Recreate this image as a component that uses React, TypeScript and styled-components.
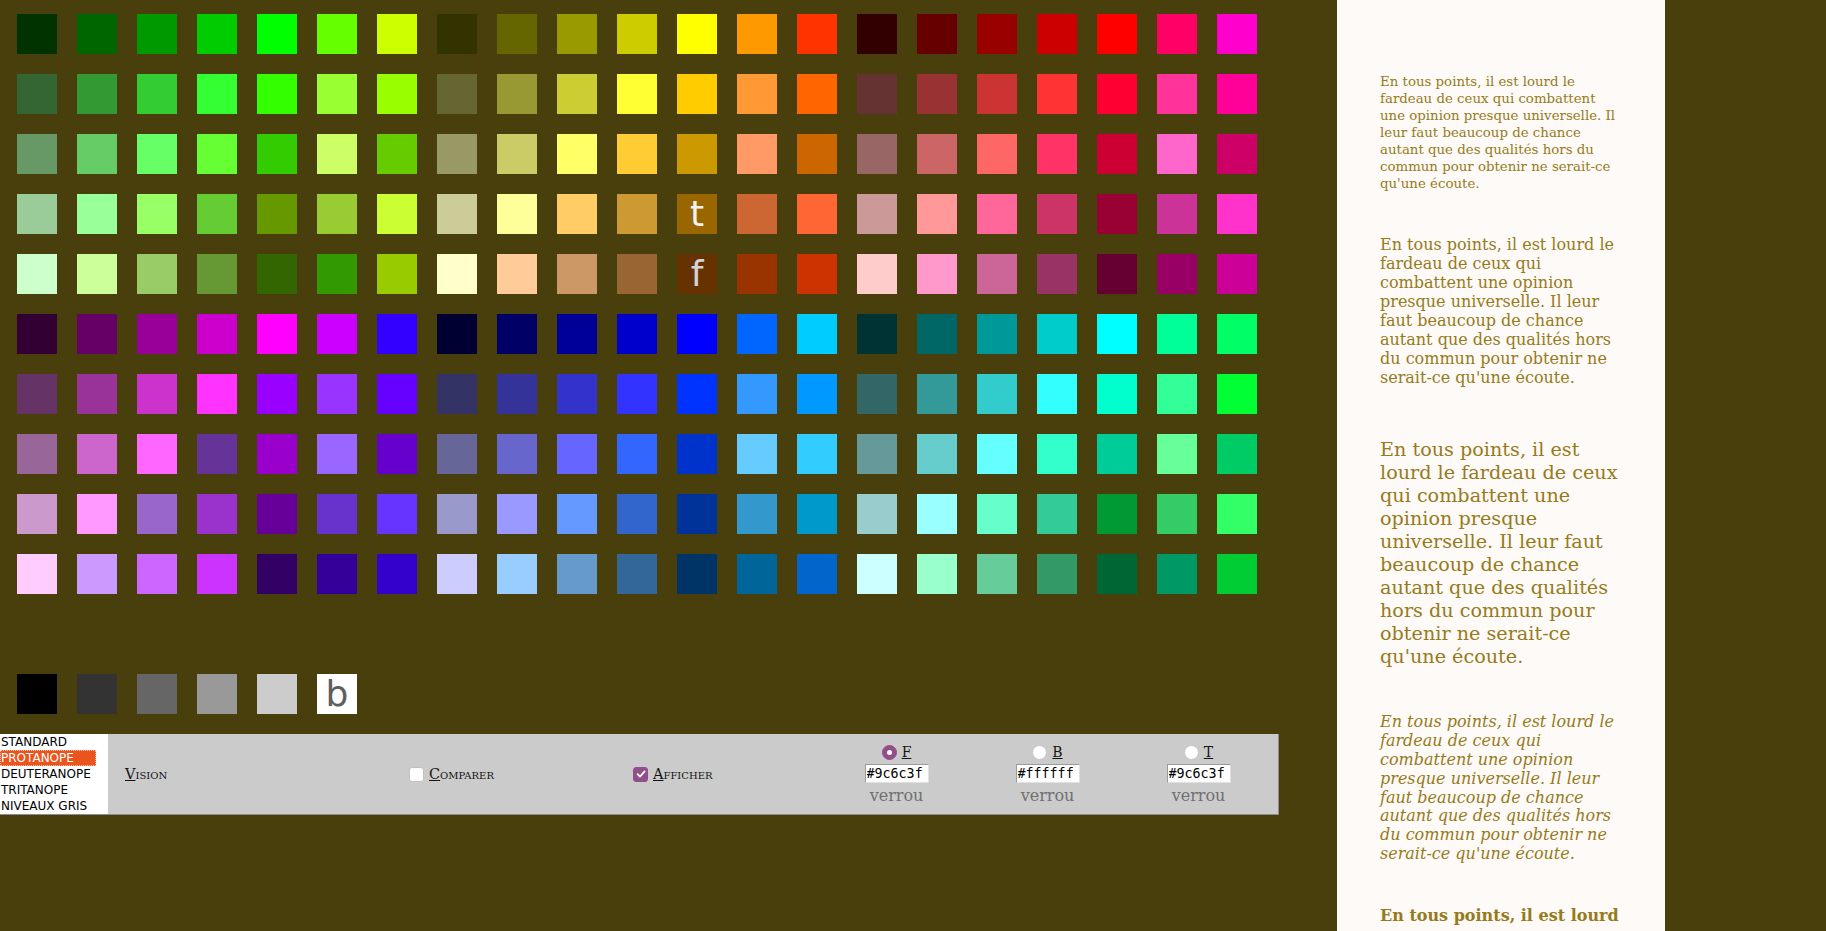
import React from "react";
import styled, { createGlobalStyle } from "styled-components";

const GlobalStyle = createGlobalStyle`
  html, body { margin: 0; padding: 0; background: #483f0d; overflow: hidden; }
  body { font-family: "DejaVu Serif", serif; }
  * { box-sizing: border-box; }
`;

const ROWS: string[][] = [
  ["003300","006600","009900","00CC00","00FF00","66FF00","CCFF00","333300","666600","999900","CCCC00","FFFF00","FF9900","FF3300","330000","660000","990000","CC0000","FF0000","FF0066","FF00CC"],
  ["336633","339933","33CC33","33FF33","33FF00","99FF33","99FF00","666633","999933","CCCC33","FFFF33","FFCC00","FF9933","FF6600","663333","993333","CC3333","FF3333","FF0033","FF3399","FF0099"],
  ["669966","66CC66","66FF66","66FF33","33CC00","CCFF66","66CC00","999966","CCCC66","FFFF66","FFCC33","CC9900","FF9966","CC6600","996666","CC6666","FF6666","FF3366","CC0033","FF66CC","CC0066"],
  ["99CC99","99FF99","99FF66","66CC33","669900","99CC33","CCFF33","CCCC99","FFFF99","FFCC66","CC9933","996600","CC6633","FF6633","CC9999","FF9999","FF6699","CC3366","990033","CC3399","FF33CC"],
  ["CCFFCC","CCFF99","99CC66","669933","336600","339900","99CC00","FFFFCC","FFCC99","CC9966","996633","663300","993300","CC3300","FFCCCC","FF99CC","CC6699","993366","660033","990066","CC0099"],
  ["330033","660066","990099","CC00CC","FF00FF","CC00FF","3300FF","000033","000066","000099","0000CC","0000FF","0066FF","00CCFF","003333","006666","009999","00CCCC","00FFFF","00FF99","00FF66"],
  ["663366","993399","CC33CC","FF33FF","9900FF","9933FF","6600FF","333366","333399","3333CC","3333FF","0033FF","3399FF","0099FF","336666","339999","33CCCC","33FFFF","00FFCC","33FF99","00FF33"],
  ["996699","CC66CC","FF66FF","663399","9900CC","9966FF","6600CC","666699","6666CC","6666FF","3366FF","0033CC","66CCFF","33CCFF","669999","66CCCC","66FFFF","33FFCC","00CC99","66FF99","00CC66"],
  ["CC99CC","FF99FF","9966CC","9933CC","660099","6633CC","6633FF","9999CC","9999FF","6699FF","3366CC","003399","3399CC","0099CC","99CCCC","99FFFF","66FFCC","33CC99","009933","33CC66","33FF66"],
  ["FFCCFF","CC99FF","CC66FF","CC33FF","330066","330099","3300CC","CCCCFF","99CCFF","6699CC","336699","003366","006699","0066CC","CCFFFF","99FFCC","66CC99","339966","006633","009966","00CC33"],
];

const GREYS = ["000000", "333333", "666666", "999999", "CCCCCC", "FFFFFF"];

const LETTERS: Record<string, { ch: string; ink: string }> = {
  "3-11": { ch: "t", ink: "#f2f2f4" },
  "4-11": { ch: "f", ink: "#d4d4d8" },
  "g-5": { ch: "b", ink: "#5e5e5e" },
};

const VISIONS = ["STANDARD", "PROTANOPE", "DEUTERANOPE", "TRITANOPE", "NIVEAUX GRIS"];

const TEXT =
  "En tous points, il est lourd le fardeau de ceux qui combattent une opinion presque universelle. Il leur faut beaucoup de chance autant que des qualités hors du commun pour obtenir ne serait-ce qu'une écoute.";

const Page = styled.div`
  display: flex;
  align-items: flex-start;
  height: 931px;
`;

const Main = styled.div`
  flex: 0 0 1279px;
  width: 1279px;
`;

const Palette = styled.div`
  display: grid;
  grid-template-columns: repeat(21, 40px);
  grid-auto-rows: 40px;
  gap: 20px;
  padding: 14px 0 20px 17px;
`;

const Swatch = styled.div<{ $bg: string; $ink?: string }>`
  background: ${(p) => p.$bg};
  display: flex;
  align-items: center;
  justify-content: center;
  font-family: "DejaVu Sans", sans-serif;
  font-size: 36px;
  line-height: 40px;
  color: ${(p) => p.$ink ?? "transparent"};
`;

const SpacerRow = styled.div`
  grid-column: 1 / -1;
`;

const ControlBar = styled.div`
  display: flex;
  align-items: stretch;
  height: 81px;
  background: #cbcbcb;
  border-right: 1px solid #8c8c8c;
  border-bottom: 1px solid #8c8c8c;
`;

const ListCell = styled.div`
  flex: 0 0 108px;
  background: #ffffff;
`;

const ListBox = styled.div`
  width: 96px;
  display: flex;
  flex-direction: column;
`;

const ListOption = styled.div<{ $selected?: boolean }>`
  height: 16px;
  line-height: 16px;
  padding-left: 1px;
  font-family: "DejaVu Sans", sans-serif;
  font-size: 12px;
  white-space: nowrap;
  color: ${(p) => (p.$selected ? "#ffffff" : "#000000")};
  background: ${(p) => (p.$selected ? "#e9541f" : "transparent")};
  outline: ${(p) => (p.$selected ? "1px dotted #ffc6a6" : "none")};
  outline-offset: -1px;
`;

const Cell = styled.div<{ $w: number; $pl?: number }>`
  flex: 0 0 ${(p) => p.$w}px;
  display: flex;
  align-items: center;
  padding-left: ${(p) => p.$pl ?? 0}px;
`;

const SmallCaps = styled.span`
  font-family: "DejaVu Serif", serif;
  font-variant: small-caps;
  font-size: 14.5px;
  color: #141414;
  u {
    text-decoration: underline;
  }
`;

const Check = styled.span<{ $on?: boolean }>`
  width: 15px;
  height: 15px;
  border-radius: 3px;
  margin-right: 5px;
  display: inline-flex;
  align-items: center;
  justify-content: center;
  background: ${(p) => (p.$on ? "#924d8b" : "#ffffff")};
  border: 1px solid ${(p) => (p.$on ? "#924d8b" : "#c2c2c2")};
`;

const ColorCell = styled.div`
  flex: 0 0 151px;
  display: flex;
  flex-direction: column;
  align-items: center;
  justify-content: center;
  gap: 3px;
`;

const RadioRow = styled.div`
  display: flex;
  align-items: center;
  height: 17px;
`;

const Radio = styled.span<{ $on?: boolean }>`
  width: 15px;
  height: 15px;
  border-radius: 50%;
  margin-right: 5px;
  display: inline-flex;
  align-items: center;
  justify-content: center;
  background: ${(p) => (p.$on ? "#924d8b" : "#ffffff")};
  border: 1px solid ${(p) => (p.$on ? "#924d8b" : "#c4c4c4")};
  &::after {
    content: "";
    width: 5px;
    height: 5px;
    border-radius: 50%;
    background: ${(p) => (p.$on ? "#ffffff" : "transparent")};
  }
`;

const RadioLabel = styled.span`
  font-family: "DejaVu Serif", serif;
  font-size: 14px;
  color: #141414;
  text-decoration: underline;
`;

const HexInput = styled.input`
  width: 64px;
  height: 19px;
  padding: 0 1px;
  margin: 0;
  border: 1px solid #9a9a9a;
  border-right-color: #e0e0e0;
  border-bottom-color: #e0e0e0;
  background: #ffffff;
  font-family: "DejaVu Sans Mono", monospace;
  font-size: 13.33px;
  color: #000000;
  outline: none;
`;

const Lock = styled.span`
  font-family: "DejaVu Serif", serif;
  font-size: 16px;
  line-height: 19px;
  color: #707070;
`;

const SidePanel = styled.div`
  flex: 0 0 328px;
  width: 328px;
  height: 931px;
  margin-left: 58px;
  background: #fdfaf8;
  padding: 73px 45px 0 43px;
  overflow: hidden;
  color: #977a1a;
`;

const Sample = styled.p<{ $size: number; $lh: number; $gap: number; $italic?: boolean; $bold?: boolean }>`
  margin: 0 0 ${(p) => p.$gap}px 0;
  font-family: "DejaVu Serif", serif;
  font-size: ${(p) => p.$size}px;
  line-height: ${(p) => p.$lh}px;
  font-style: ${(p) => (p.$italic ? "italic" : "normal")};
  font-weight: ${(p) => (p.$bold ? "bold" : "normal")};
`;

const CheckMark = () => (
  <svg width="10" height="10" viewBox="0 0 10 10">
    <path d="M1.6 5.2 L4 7.6 L8.6 2.4" fill="none" stroke="#ffffff" strokeWidth="1.8" strokeLinecap="round" strokeLinejoin="round" />
  </svg>
);

const COLOR_FIELDS = [
  { key: "F", on: true, value: "#9c6c3f" },
  { key: "B", on: false, value: "#ffffff" },
  { key: "T", on: false, value: "#9c6c3f" },
];

const SAMPLES = [
  { size: 13.33, lh: 17.07, gap: 43 },
  { size: 16, lh: 19, gap: 51 },
  { size: 19.2, lh: 23, gap: 45 },
  { size: 16, lh: 18.8, gap: 37.5, italic: true },
  { size: 16, lh: 30, gap: 0, bold: true },
];

export default function App() {
  return (
    <>
      <GlobalStyle />
      <Page>
        <Main>
          <Palette>
            {ROWS.map((row, r) =>
              row.map((c, i) => {
                const l = LETTERS[`${r}-${i}`];
                return (
                  <Swatch key={`${r}-${i}`} $bg={`#${c}`} $ink={l?.ink}>
                    {l?.ch}
                  </Swatch>
                );
              })
            )}
            <SpacerRow />
            {GREYS.map((c, i) => {
              const l = LETTERS[`g-${i}`];
              return (
                <Swatch key={`g-${i}`} $bg={`#${c}`} $ink={l?.ink}>
                  {l?.ch}
                </Swatch>
              );
            })}
          </Palette>
          <ControlBar>
            <ListCell>
              <ListBox>
                {VISIONS.map((v) => (
                  <ListOption key={v} $selected={v === "PROTANOPE"}>
                    {v}
                  </ListOption>
                ))}
              </ListBox>
            </ListCell>
            <Cell $w={292} $pl={17}>
              <SmallCaps>
                <u>V</u>ision
              </SmallCaps>
            </Cell>
            <Cell $w={225} $pl={9}>
              <Check />
              <SmallCaps>
                <u>C</u>omparer
              </SmallCaps>
            </Cell>
            <Cell $w={196} $pl={8}>
              <Check $on>
                <CheckMark />
              </Check>
              <SmallCaps>
                <u>A</u>fficher
              </SmallCaps>
            </Cell>
            {COLOR_FIELDS.map((f) => (
              <ColorCell key={f.key}>
                <RadioRow>
                  <Radio $on={f.on} />
                  <RadioLabel>{f.key}</RadioLabel>
                </RadioRow>
                <HexInput readOnly defaultValue={f.value} />
                <Lock>verrou</Lock>
              </ColorCell>
            ))}
          </ControlBar>
        </Main>
        <SidePanel>
          {SAMPLES.map((s, i) => (
            <Sample key={i} $size={s.size} $lh={s.lh} $gap={s.gap} $italic={s.italic} $bold={s.bold}>
              {TEXT}
            </Sample>
          ))}
        </SidePanel>
      </Page>
    </>
  );
}
